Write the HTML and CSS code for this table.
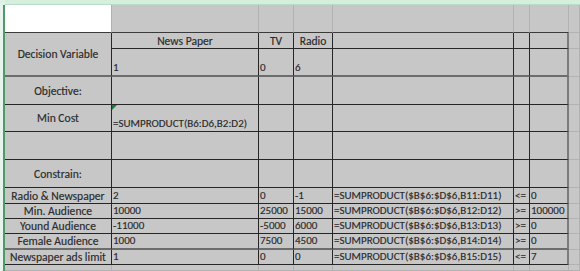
FILE: index.html
```html
<!DOCTYPE html>
<html lang="en">
<head>
<meta charset="utf-8">
<title>Media plan</title>
<link rel="stylesheet" href="styles.css">
</head>
<body>
<div class="sheet">
  <div class="corner"></div>
  <div class="colhead"></div>
  <div class="rowhead"></div>
  <div class="cells">
    <!-- row 1 -->
    <div class="c white bb"></div>
    <div class="c bb"></div>
    <div class="c bb"></div>
    <div class="c bb"></div>
    <div class="c bb"></div>
    <div class="c bb"></div>
    <div class="c bb"></div>
    <div class="c"></div>

    <!-- rows 2-3: decision variables -->
    <div class="c b ctr span2 gb">Decision Variable</div>
    <div class="c b ctr">News Paper</div>
    <div class="c b ctr">TV</div>
    <div class="c b ctr">Radio</div>
    <div class="c b"></div>
    <div class="c b"></div>
    <div class="c b edge"></div>
    <div class="c"></div>

    <div class="c b gb">1</div>
    <div class="c b gb">0</div>
    <div class="c b gb">6</div>
    <div class="c b gb"></div>
    <div class="c b gb"></div>
    <div class="c b gb edge"></div>
    <div class="c"></div>

    <!-- row 4 -->
    <div class="c b ctr">Objective:</div>
    <div class="c b"></div>
    <div class="c b"></div>
    <div class="c b"></div>
    <div class="c b"></div>
    <div class="c b"></div>
    <div class="c b edge"></div>
    <div class="c"></div>

    <!-- row 5 -->
    <div class="c b ctr">Min Cost</div>
    <div class="c b flag">=SUMPRODUCT(B6:D6,B2:D2)</div>
    <div class="c b"></div>
    <div class="c b"></div>
    <div class="c b"></div>
    <div class="c b"></div>
    <div class="c b edge"></div>
    <div class="c"></div>

    <!-- row 6 -->
    <div class="c b"></div>
    <div class="c b"></div>
    <div class="c b"></div>
    <div class="c b"></div>
    <div class="c b"></div>
    <div class="c b"></div>
    <div class="c b edge"></div>
    <div class="c"></div>

    <!-- row 7 -->
    <div class="c b ctr">Constrain:</div>
    <div class="c b"></div>
    <div class="c b"></div>
    <div class="c b"></div>
    <div class="c b"></div>
    <div class="c b"></div>
    <div class="c b edge"></div>
    <div class="c"></div>

    <!-- constraints -->
    <div class="c b ctr">Radio &amp; Newspaper</div>
    <div class="c b">2</div>
    <div class="c b">0</div>
    <div class="c b">-1</div>
    <div class="c b">=SUMPRODUCT($B$6:$D$6,B11:D11)</div>
    <div class="c b">&lt;=</div>
    <div class="c b edge">0</div>
    <div class="c"></div>

    <div class="c b ctr">Min. Audience</div>
    <div class="c b">10000</div>
    <div class="c b">25000</div>
    <div class="c b">15000</div>
    <div class="c b">=SUMPRODUCT($B$6:$D$6,B12:D12)</div>
    <div class="c b">&gt;=</div>
    <div class="c b edge">100000</div>
    <div class="c"></div>

    <div class="c b ctr">Yound Audience</div>
    <div class="c b">-11000</div>
    <div class="c b">-5000</div>
    <div class="c b">6000</div>
    <div class="c b">=SUMPRODUCT($B$6:$D$6,B13:D13)</div>
    <div class="c b">&gt;=</div>
    <div class="c b edge">0</div>
    <div class="c"></div>

    <div class="c b ctr gb">Female Audience</div>
    <div class="c b gb">1000</div>
    <div class="c b gb">7500</div>
    <div class="c b gb">4500</div>
    <div class="c b gb">=SUMPRODUCT($B$6:$D$6,B14:D14)</div>
    <div class="c b gb">&gt;=</div>
    <div class="c b gb edge">0</div>
    <div class="c"></div>

    <div class="c b ctr">Newspaper ads limit</div>
    <div class="c b">1</div>
    <div class="c b">0</div>
    <div class="c b">0</div>
    <div class="c b">=SUMPRODUCT($B$6:$D$6,B15:D15)</div>
    <div class="c b">&lt;=</div>
    <div class="c b edge">7</div>
    <div class="c"></div>

    <!-- row 13 -->
    <div class="c"></div>
    <div class="c"></div>
    <div class="c"></div>
    <div class="c"></div>
    <div class="c"></div>
    <div class="c"></div>
    <div class="c"></div>
    <div class="c"></div>
  </div>
</div>
</body>
</html>
```
FILE: styles.css
```css
html, body {
  margin: 0;
  padding: 0;
  background: #c7c7c7;
}

.sheet {
  width: 580px;
  height: 271px;
  overflow: hidden;
  display: grid;
  grid-template-columns: 5px 1fr;
  grid-template-rows: 5px 1fr;
}

.corner {
  background: #dff2e6;
}

.colhead {
  background: #d5eedd;
  border-bottom: 1px solid #b9dcc5;
  box-sizing: border-box;
}

.rowhead {
  background: #e9f3ed;
  border-right: 2px solid #4f9a66;
  box-sizing: border-box;
}

.cells {
  display: grid;
  grid-template-columns: 107px 147px 35px 39px 181px 16px 39px 1fr;
  grid-template-rows: 28px 16px 28px 28px 27px 28px 28px 16px 15px 15px 16px 15px 1fr;
  background: #c7c7c7;
}

/* one worksheet cell: faint gridlines right and bottom, text bottom-left */
.c {
  box-sizing: border-box;
  min-width: 0;
  display: flex;
  align-items: flex-end;
  justify-content: flex-start;
  padding: 0 0 1px 1px;
  border-right: 1px solid #b2b2b2;
  border-bottom: 1px solid #b2b2b2;
  font-family: Carlito, Calibri, Lato, "Open Sans", sans-serif;
  font-size: 11px;
  line-height: 13px;
  color: #2a2a2a;
  -webkit-text-stroke: 0.15px #2a2a2a;
  white-space: nowrap;
  overflow: visible;
  position: relative;
}

.white {
  background: #ffffff;
}

/* drawn borders of the model block */
.b {
  border-right-color: #262626;
  border-bottom-color: #262626;
}

.bb {
  border-bottom-color: #3a3a3a;
}

/* heavier grey rule under some rows */
.gb {
  border-bottom: 2px solid #6c6c6c;
}

/* outer right edge of the block */
.edge {
  border-right: 2px solid #7c7c7c;
}

/* centred labels */
.ctr {
  justify-content: center;
  align-items: center;
  padding: 1px 1px 0;
  font-size: 11.6px;
}

.span2 {
  grid-row: span 2;
}

/* small error marker in the corner of a formula cell */
.flag::before {
  content: "";
  position: absolute;
  left: 0;
  top: 0;
  border-top: 5px solid #1f7a3c;
  border-right: 5px solid transparent;
}
```
